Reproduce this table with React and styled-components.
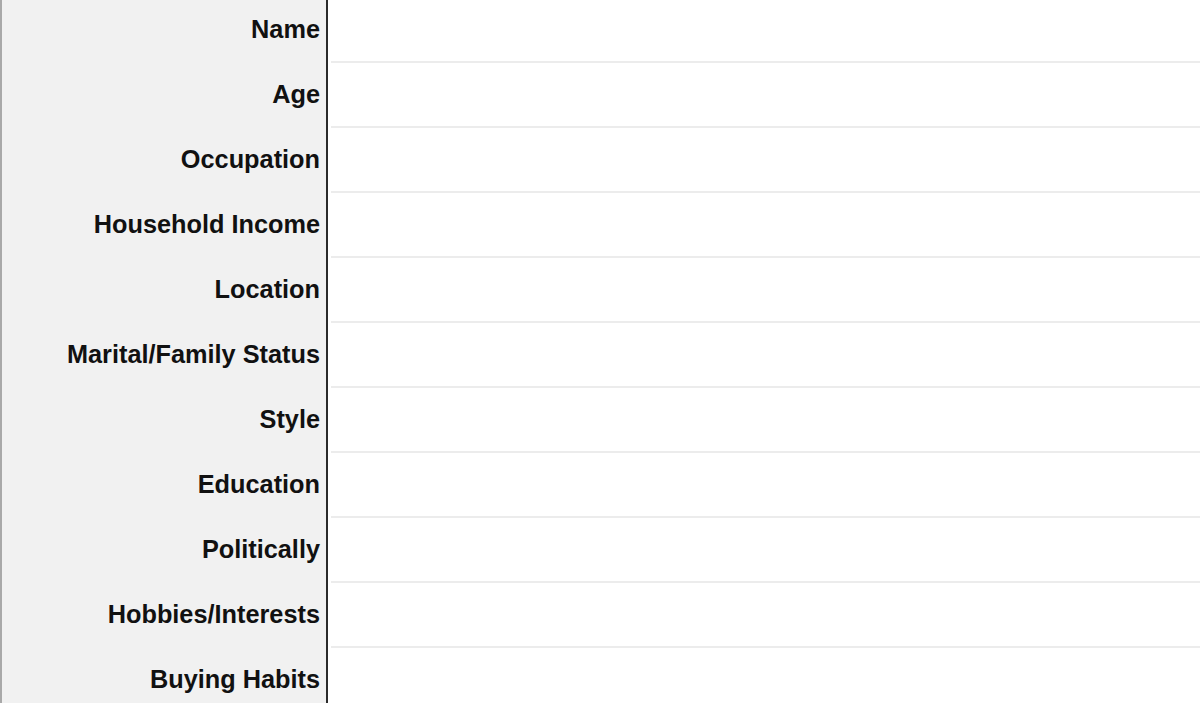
import React from "react";
import styled, { createGlobalStyle } from "styled-components";

const Global = createGlobalStyle`
  html, body { margin: 0; padding: 0; background: #ffffff; overflow: hidden; }
  body { font-family: "Liberation Sans", Arial, Helvetica, sans-serif; }
`;

const Sheet = styled.div`
  display: flex;
  flex-direction: column;
  margin-top: -2px;
  width: 1200px;
`;

const Row = styled.div`
  display: grid;
  grid-template-columns: 328px 1fr;
  height: 65px;
`;

const Label = styled.div`
  display: flex;
  align-items: center;
  justify-content: flex-end;
  background: #f1f1f1;
  border-left: 2px solid #a9a9a9;
  border-right: 2px solid #2b2b2b;
  padding-right: 6px;
  padding-bottom: 2px;
  font-size: 25.3px;
  font-weight: 700;
  color: #111111;
  white-space: nowrap;
  letter-spacing: 0px;
`;

const Value = styled.div`
  margin-left: 3px;
  border-bottom: 2px solid #ececec;
  background: #ffffff;
`;

const fields = [
  "Name",
  "Age",
  "Occupation",
  "Household Income",
  "Location",
  "Marital/Family Status",
  "Style",
  "Education",
  "Politically",
  "Hobbies/Interests",
  "Buying Habits",
];

export default function App() {
  return (
    <>
      <Global />
      <Sheet>
        {fields.map((f) => (
          <Row key={f}>
            <Label>{f}</Label>
            <Value />
          </Row>
        ))}
      </Sheet>
    </>
  );
}
